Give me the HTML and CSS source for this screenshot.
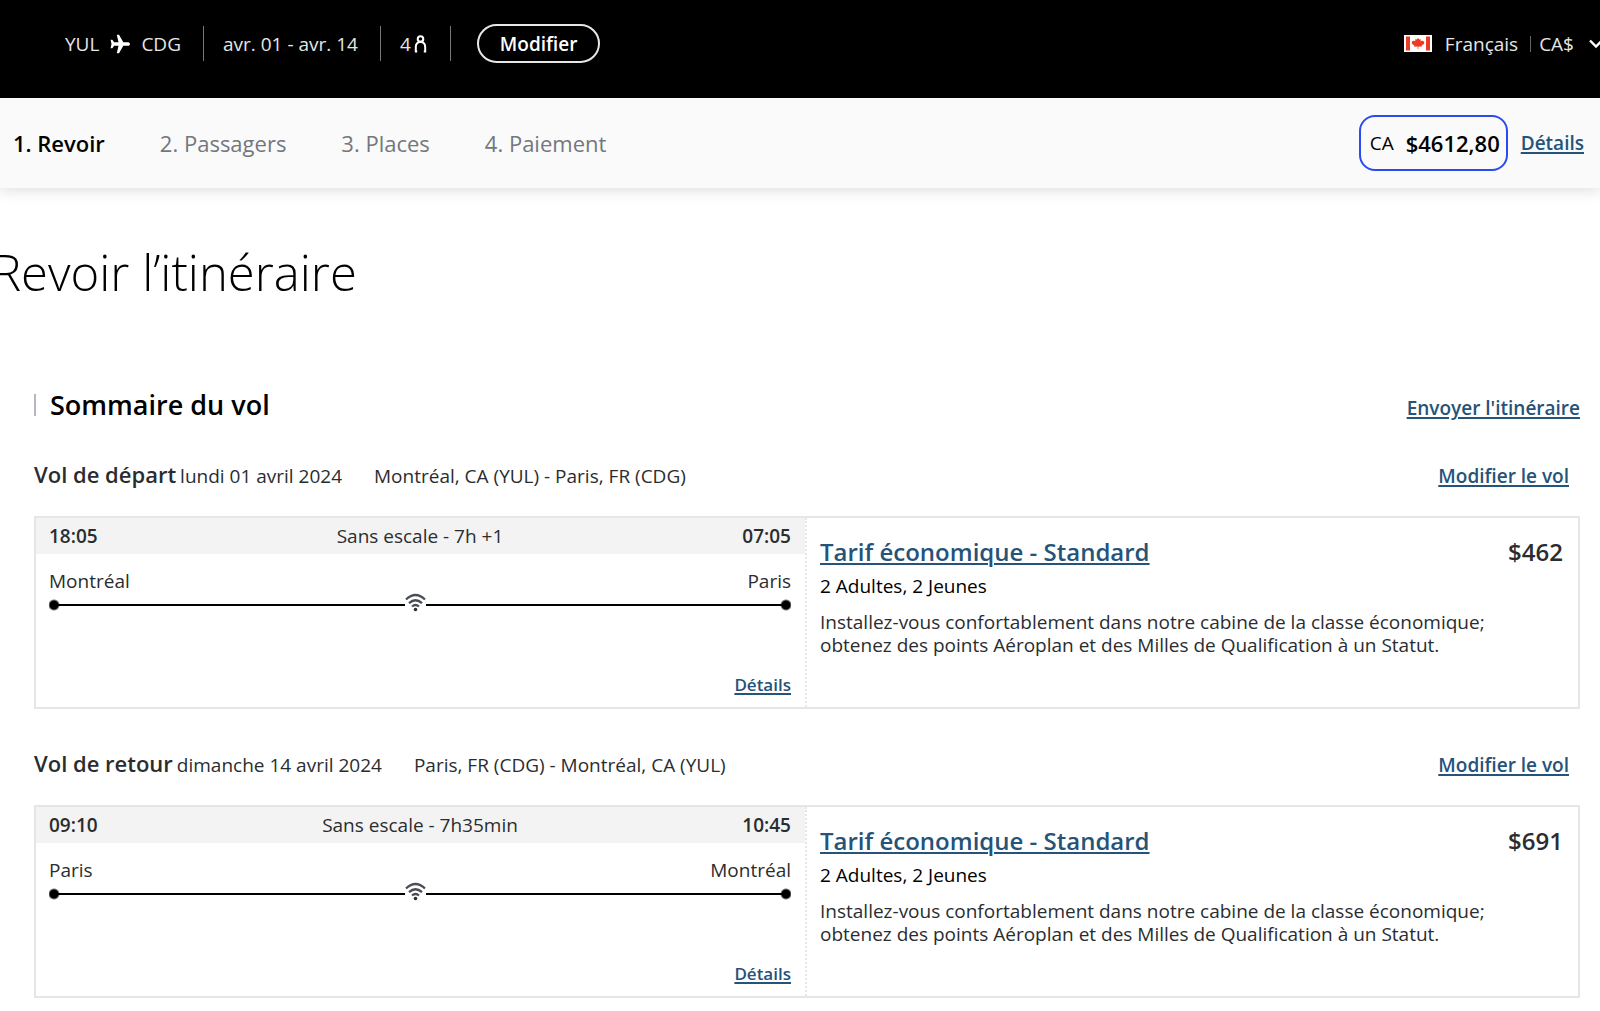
FILE: index.html
```html
<!DOCTYPE html>
<html lang="fr">
<head>
    <meta charset="UTF-8">
    <meta name="viewport" content="width=device-width, initial-scale=1.0">
    <title>Revoir l’itinéraire</title>
    <link rel="stylesheet" href="styles.css">
</head>
<body>
    <header class="topbar">
        <div class="trip">
            <div class="trip-item route">
                <span>YUL</span>
                <svg class="plane" viewBox="0 0 24 24" aria-hidden="true">
                    <path d="M24 12c0-1.200-1-2.200-2.300-2.200h-5.700L10.800 1H8.200l2 8.800H5L2.800 7H.7L1.800 12 .7 17h2.100L5 14.200h5.200L8.200 23h2.600l5.200-8.800h5.700c1.300 0 2.300-1 2.300-2.200z" fill="#fff"/>
                </svg>
                <span>CDG</span>
            </div>
            <div class="trip-item">avr. 01 - avr. 14</div>
            <div class="trip-item passengers">
                <span>4</span>
                <svg class="person" viewBox="0 0 13 18" aria-label="passagers">
                    <g fill="none" stroke="#fff" stroke-width="2">
                        <circle cx="6.500" cy="4" r="2.800"/>
                        <path d="M1 16.500h2.200M12 16.500H9.800M1.800 17.500V12c0-3 1.800-4.800 4.700-5.200 2.900.4 4.700 2.200 4.700 5.200v5.500"/>
                    </g>
                </svg>
            </div>
            <button type="button" class="edit-button">Modifier</button>
        </div>

        <button type="button" class="locale">
            <svg class="flag" viewBox="0 0 28 17" aria-hidden="true">
                <path d="M0 0h28v17H0z" fill="#fff"/>
                <path d="M2 1.500h4v14H2zM22 1.500h4v14h-4z" fill="#ec3b24"/>
                <path d="M14 3l1.400 1.600 1.400-.4-.1 2 1.800-.8.500.8 1.500.2-.6 1.600.6.600-3 2.200.3 1-3.400-.4V14h-.8v-2.600l-3.400.4.300-1-3-2.200.6-.6-.6-1.600 1.500-.2.500-.8 1.800.8-.1-2 1.400.4z" fill="#ec3b24"/>
            </svg>
            <span>Français</span>
            <span class="currency">CA$</span>
            <svg class="chevron" viewBox="0 0 14 10" aria-hidden="true">
                <path d="M1 1.500l6 6 6-6" fill="none" stroke="#fff" stroke-width="2.400"/>
            </svg>
        </button>
    </header>

    <nav class="steps-bar">
        <ol class="steps">
            <li class="active">1. Revoir</li>
            <li>2. Passagers</li>
            <li>3. Places</li>
            <li>4. Paiement</li>
        </ol>
        <div class="total">
            <div class="total-box">
                <span>CA</span>
                <strong>$4612,80</strong>
            </div>
            <a href="#">Détails</a>
        </div>
    </nav>

    <main>
        <h1>Revoir l’itinéraire</h1>

        <div class="section-head">
            <h2>Sommaire du vol</h2>
            <a href="#">Envoyer l'itinéraire</a>
        </div>

        <section class="flight">
            <div class="flight-head">
                <h3>Vol de départ</h3>
                <span class="date">lundi 01 avril 2024</span>
                <span>Montréal, CA (YUL) - Paris, FR (CDG)</span>
                <a href="#">Modifier le vol</a>
            </div>
            <div class="card">
                <div class="segment">
                    <div class="times">
                        <strong>18:05</strong>
                        <span>Sans escale - 7h +1</span>
                        <strong>07:05</strong>
                    </div>
                    <div class="cities">
                        <span>Montréal</span>
                        <span>Paris</span>
                    </div>
                    <div class="track">
                        <svg class="wifi" viewBox="0 0 21 19" aria-label="Wi-Fi">
                            <g fill="none" stroke="#4a4d52" stroke-width="2.300">
                                <path d="M1 6.500Q10.500-2.500 20 6.500"/>
                                <path d="M4 10.200q6.500-6 13 0"/>
                                <path d="M7 13.500q3.500-3 7 0"/>
                            </g>
                            <circle cx="10.500" cy="16.500" r="1.800" fill="#2a2d30"/>
                        </svg>
                    </div>
                    <a href="#" class="details">Détails</a>
                </div>
                <div class="fare">
                    <div class="fare-head">
                        <a href="#">Tarif économique - Standard</a>
                        <strong>$462</strong>
                    </div>
                    <p class="pax">2 Adultes, 2 Jeunes</p>
                    <p class="description">Installez-vous confortablement dans notre cabine de la classe économique; obtenez des points Aéroplan et des Milles de Qualification à un Statut.</p>
                </div>
            </div>
        </section>

        <section class="flight">
            <div class="flight-head">
                <h3>Vol de retour</h3>
                <span class="date">dimanche 14 avril 2024</span>
                <span>Paris, FR (CDG) - Montréal, CA (YUL)</span>
                <a href="#">Modifier le vol</a>
            </div>
            <div class="card">
                <div class="segment">
                    <div class="times">
                        <strong>09:10</strong>
                        <span>Sans escale - 7h35min</span>
                        <strong>10:45</strong>
                    </div>
                    <div class="cities">
                        <span>Paris</span>
                        <span>Montréal</span>
                    </div>
                    <div class="track">
                        <svg class="wifi" viewBox="0 0 21 19" aria-label="Wi-Fi">
                            <g fill="none" stroke="#4a4d52" stroke-width="2.300">
                                <path d="M1 6.500Q10.500-2.500 20 6.500"/>
                                <path d="M4 10.200q6.500-6 13 0"/>
                                <path d="M7 13.500q3.500-3 7 0"/>
                            </g>
                            <circle cx="10.500" cy="16.500" r="1.800" fill="#2a2d30"/>
                        </svg>
                    </div>
                    <a href="#" class="details">Détails</a>
                </div>
                <div class="fare">
                    <div class="fare-head">
                        <a href="#">Tarif économique - Standard</a>
                        <strong>$691</strong>
                    </div>
                    <p class="pax">2 Adultes, 2 Jeunes</p>
                    <p class="description">Installez-vous confortablement dans notre cabine de la classe économique; obtenez des points Aéroplan et des Milles de Qualification à un Statut.</p>
                </div>
            </div>
        </section>
    </main>
</body>
</html>
```

FILE: styles.css
```css
* {
    margin: 0;
    padding: 0;
    box-sizing: border-box;
}

body {
    background: #fff;
    color: #2a2d30;
    font-family: 'Open Sans', sans-serif;
    font-size: 19px;
    line-height: 24px;
    overflow-x: hidden;
}

a {
    color: #255379;
    font-weight: 600;
    text-decoration-thickness: 2px;
    text-underline-offset: 2px;
}

strong {
    font-weight: 600;
}

button {
    background: none;
    border: none;
    color: #fff;
    font: inherit;
    cursor: pointer;
}

/* Top bar */
.topbar {
    background: #000;
    color: #e6e6e6;
    height: 98px;
    padding: 24px 0 0 65px;
    display: flex;
    justify-content: space-between;
    align-items: flex-start;
}

.trip {
    display: flex;
    align-items: center;
}

.trip-item {
    height: 35px;
    padding-right: 22px;
    margin-right: 19px;
    border-right: 1px solid #777;
    display: flex;
    align-items: center;
}

.route {
    gap: 11px;
}

.plane {
    width: 20px;
    height: 22px;
}

.passengers {
    gap: 3px;
    padding-right: 23px;
    margin-right: 26px;
}

.person {
    width: 13px;
    height: 18px;
}

.edit-button {
    height: 39px;
    padding: 0 21px;
    border: 2px solid #e6e6e6;
    border-radius: 20px;
    font-weight: 600;
}

.locale {
    color: #e6e6e6;
    height: 39px;
    margin-right: -3px;
    display: flex;
    align-items: center;
}

.flag {
    width: 28px;
    height: 17px;
    margin-right: 13px;
}

.currency {
    margin-left: 12px;
    padding-left: 8px;
    border-left: 1px solid #666;
    line-height: 16px;
}

.chevron {
    width: 14px;
    height: 10px;
    margin-left: 15px;
}

/* Booking steps */
.steps-bar {
    background: #fafafa;
    height: 90px;
    padding: 0 16px 1px 13px;
    display: flex;
    justify-content: space-between;
    align-items: center;
    box-shadow: 0 2px 14px rgba(0, 0, 0, 0.14);
}

.steps {
    display: flex;
    gap: 55px;
    list-style: none;
    color: #73777d;
    font-size: 22px;
}

.steps .active {
    color: #000;
    font-weight: 600;
}

.total {
    color: #000;
    display: flex;
    align-items: center;
    gap: 13px;
}

.total-box {
    height: 56px;
    padding: 0 6px 0 9px;
    border: 2px solid #2b4bef;
    border-radius: 16px;
    display: flex;
    align-items: center;
    gap: 12px;
}

.total-box strong {
    font-size: 22px;
}

/* Itinerary */
main {
    padding: 49px 20px 13px 34px;
}

h1 {
    color: #000;
    font-size: 49px;
    font-weight: 300;
    line-height: 70px;
    margin-left: -42px;
}

.section-head {
    display: flex;
    justify-content: space-between;
    align-items: baseline;
    margin-top: 87px;
}

h2 {
    color: #000;
    font-size: 27px;
    font-weight: 600;
    line-height: 22px;
    padding-left: 14px;
    border-left: 2px solid #b4b8be;
}

.flight {
    margin-top: 42px;
}

.flight-head {
    display: flex;
    align-items: baseline;
    padding-right: 11px;
    margin-bottom: 28px;
}

h3 {
    font-size: 22px;
    font-weight: 600;
    line-height: 24px;
    margin-right: 4px;
}

.date {
    margin-right: 32px;
}

.flight-head a {
    margin-left: auto;
}

.card {
    border: 2px solid #e6e6e6;
    min-height: 193px;
    display: grid;
    grid-template-columns: 1fr 1fr;
}

.segment {
    border-right: 2px dotted #e6e6e6;
    display: flex;
    flex-direction: column;
}

.times {
    background: #f3f3f3;
    padding: 6px 14px 6px 13px;
    display: flex;
    justify-content: space-between;
}

.cities {
    padding: 15px 14px 0 13px;
    display: flex;
    justify-content: space-between;
}

/* Line with a dot at each end and the wifi badge between */
.track {
    margin: 0 14px 0 13px;
    height: 20px;
    display: flex;
    justify-content: center;
    padding-right: 9px;
    background:
        radial-gradient(circle at 5px 12px, #000 4px, transparent 6px),
        radial-gradient(circle at calc(100% - 5px) 12px, #000 4px, transparent 6px),
        linear-gradient(#000, #000) 5px 11px / calc(100% - 10px) 2px no-repeat;
}

.wifi {
    width: 21px;
    height: 19px;
    background: #fff;
}

.details {
    font-size: 17px;
    margin: auto 14px 10px auto;
}

.fare {
    padding: 20px 15px 20px 13px;
}

.fare-head {
    display: flex;
    justify-content: space-between;
    font-size: 24px;
    line-height: 28px;
}

.pax {
    color: #000;
    margin-top: 8px;
}

.description {
    line-height: 23px;
    margin-top: 13px;
    max-width: 690px;
}
```
